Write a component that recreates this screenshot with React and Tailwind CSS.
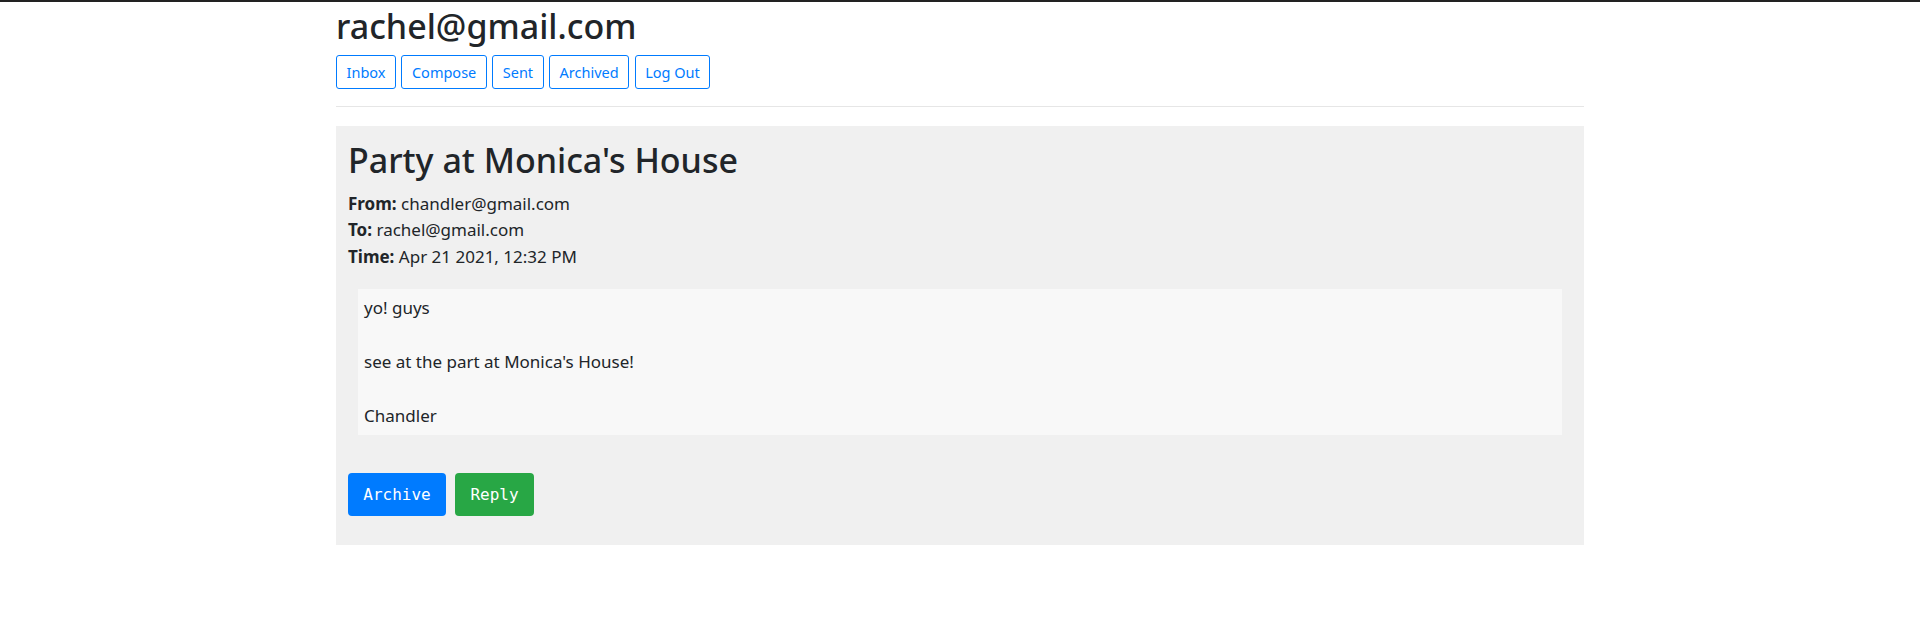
const navItems = ['Inbox', 'Compose', 'Sent', 'Archived', 'Log Out']

const email = {
  subject: "Party at Monica's House",
  sender: 'chandler@gmail.com',
  recipients: 'rachel@gmail.com',
  timestamp: 'Apr 21 2021, 12:32 PM',
  body: ['yo! guys', '', "see at the part at Monica's House!", '', 'Chandler'],
}

export default function App() {
  return (
    <div className="min-h-screen bg-white border-t-2 border-[#222] text-[#212529] font-['Noto_Sans',sans-serif]">
      <div className="max-w-[1280px] mx-auto px-4">
        <h2 className="text-[34px] font-medium leading-[1.2] pt-[4px]">rachel@gmail.com</h2>

        <div className="flex gap-[5.5px] mt-[8px]">
          {navItems.map((item) => (
            <button
              key={item}
              className="h-[34px] px-[9.5px] border border-[#007bff] rounded-[3px] text-[#007bff] text-[14.5px] leading-none"
            >
              {item}
            </button>
          ))}
        </div>

        <hr className="mt-[17px] border-t border-[#e6e6e6]" />

        <div className="mt-[19px] bg-[#f0f0f0] px-3 pt-[14px] pb-[29px]">
          <h1 className="text-[34px] font-medium leading-[1.2]">{email.subject}</h1>
          <div className="mt-[10px] text-[17px] leading-[26.5px]">
            <div>
              <b>From:</b> {email.sender}
            </div>
            <div>
              <b>To:</b> {email.recipients}
            </div>
            <div>
              <b>Time:</b> {email.timestamp}
            </div>
          </div>

          <div className="mx-[10px] mt-[19px] bg-[#f8f8f8] px-[6px] pt-[5px] pb-[6px] text-[17px] leading-[27px]">
            {email.body.map((line, i) => (
              <div key={i} className="h-[27px]">
                {line}
              </div>
            ))}
          </div>

          <div className="flex gap-[9px] mt-[38px]">
            <button className="h-[43px] w-[98px] rounded-[4px] bg-[#007bff] text-white font-['DejaVu_Sans_Mono',monospace] text-[16px]">
              Archive
            </button>
            <button className="h-[43px] w-[79px] rounded-[4px] bg-[#28a745] text-white font-['DejaVu_Sans_Mono',monospace] text-[16px]">
              Reply
            </button>
          </div>
        </div>
      </div>
    </div>
  )
}
